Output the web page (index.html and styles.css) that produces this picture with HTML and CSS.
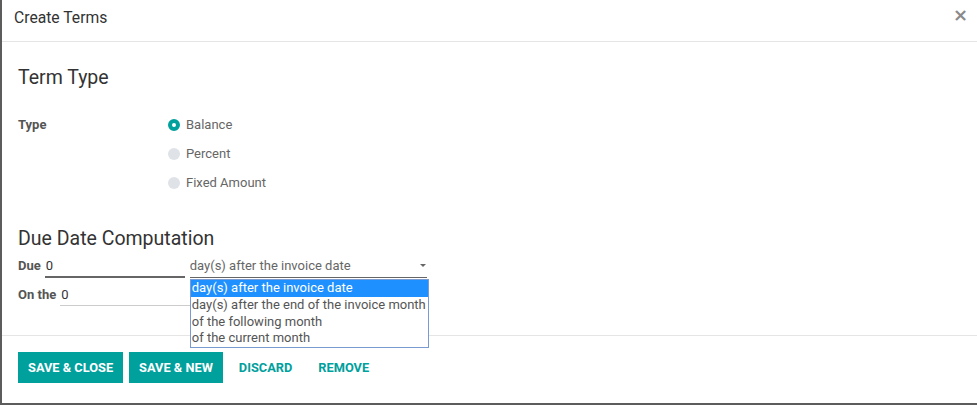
FILE: index.html
```html
<!DOCTYPE html>
<html lang="en">
  <head>
    <meta charset="UTF-8" />
    <meta name="viewport" content="width=device-width, initial-scale=1.0" />
    <title>Create Terms</title>
    <link rel="stylesheet" href="styles.css">
  </head>
  <body>
    <div class="modal">
      <header class="modal-header">
        <h4 class="modal-title">Create Terms</h4>
        <button class="close-btn" type="button">&times;</button>
      </header>

      <main class="modal-body">
        <h2 class="group-title">Term Type</h2>
        <div class="field-row">
          <label class="field-label">Type</label>
          <div class="radio-list">
            <label class="radio"><span class="radio-dot checked"></span>Balance</label>
            <label class="radio"><span class="radio-dot"></span>Percent</label>
            <label class="radio"><span class="radio-dot"></span>Fixed Amount</label>
          </div>
        </div>

        <h2 class="group-title second">Due Date Computation</h2>
        <div class="due-row">
          <span class="inline-label">Due</span>
          <span class="line-input due-days">0</span>
          <div class="select-wrap">
            <span class="select">day(s) after the invoice date<span class="caret"></span></span>
            <ul class="select-popup">
              <li class="active">day(s) after the invoice date</li>
              <li>day(s) after the end of the invoice month</li>
              <li>of the following month</li>
              <li>of the current month</li>
            </ul>
          </div>
        </div>
        <div class="due-row on-row">
          <span class="inline-label">On the</span>
          <span class="line-input day-of-month">0</span>
        </div>
      </main>

      <footer class="modal-footer">
        <button class="btn btn-primary" type="button">SAVE &amp; CLOSE</button>
        <button class="btn btn-primary" type="button">SAVE &amp; NEW</button>
        <button class="btn btn-link" type="button">DISCARD</button>
        <button class="btn btn-link" type="button">REMOVE</button>
      </footer>
    </div>
  </body>
</html>
```

FILE: styles.css
```css
html,
body {
  margin: 0;
  height: 100%;
  overflow: hidden;
}

body {
  background-color: #5c5c5c;
  font-family: Roboto, "Noto Sans", sans-serif;
  font-size: 13px;
  color: #666666;
}

.modal {
  margin-left: 2px;
  width: 975px;
  height: 403px;
  background-color: #ffffff;
}

.modal-header {
  box-sizing: border-box;
  height: 42px;
  padding: 0 12px 7px;
  display: flex;
  align-items: center;
  justify-content: space-between;
  border-bottom: 1px solid #e5e5e5;
}

.modal-title {
  margin: 0;
  font-size: 15.7px;
  font-weight: 400;
  color: #333333;
}

.close-btn {
  border: none;
  background: none;
  padding: 0;
  margin-right: -3px;
  margin-top: -4px;
  font-family: "DejaVu Sans", sans-serif;
  font-size: 18px;
  font-weight: bold;
  color: #8a8a8a;
  line-height: 1;
}

.modal-body {
  padding: 24px 16px 29px;
}

.group-title {
  margin: 0;
  font-size: 19.5px;
  line-height: 24px;
  font-weight: 400;
  color: #333333;
}

.group-title.second {
  margin-top: 30px;
}

.field-row {
  display: flex;
  margin-top: 20px;
}

.field-label {
  width: 150px;
  line-height: 29px;
  font-weight: bold;
  color: #555555;
}

.radio-list {
  display: flex;
  flex-direction: column;
}

.radio {
  display: flex;
  align-items: center;
  height: 29px;
  gap: 6px;
}

.radio-dot {
  box-sizing: border-box;
  width: 12px;
  height: 12px;
  border-radius: 50%;
  background-color: #dfe3e7;
}

.radio-dot.checked {
  background-color: #ffffff;
  border: 4px solid #00a09d;
}

.due-row {
  display: flex;
  margin-top: 4px;
  line-height: 21px;
}

.due-row.on-row {
  margin-top: 6px;
}

.inline-label {
  font-weight: bold;
  color: #555555;
  margin-right: 4px;
}

.line-input {
  box-sizing: border-box;
  height: 23px;
  padding-left: 1px;
  color: #333333;
  border-bottom: 2px solid #666666;
}

.due-days {
  width: 140px;
}

.day-of-month {
  width: 140px;
  height: 22px;
  border-bottom: 1px solid #cccccc;
}

.select-wrap {
  position: relative;
  margin-left: 5px;
}

.select {
  box-sizing: border-box;
  display: block;
  position: relative;
  width: 237px;
  height: 23px;
  color: #666666;
  border-bottom: 1px solid #666666;
}

.caret {
  position: absolute;
  right: 1px;
  top: 9px;
  border-left: 3px solid transparent;
  border-right: 3px solid transparent;
  border-top: 3px solid #666666;
}

.select-popup {
  position: absolute;
  left: 0;
  top: 24px;
  width: 237px;
  margin: 0;
  padding: 0;
  list-style: none;
  background-color: #ffffff;
  border: 1px solid #7a9bd2;
  z-index: 2;
}

.select-popup li {
  line-height: 16.75px;
  padding-left: 1px;
  white-space: nowrap;
  color: #555555;
}

.select-popup li.active {
  background-color: #1e90ff;
  color: #ffffff;
}

.modal-footer {
  border-top: 1px solid #e5e5e5;
  padding: 16px 16px;
  display: flex;
  gap: 6px;
}

.btn {
  height: 31px;
  padding: 0 10px;
  border: none;
  font-family: Roboto, "Noto Sans", sans-serif;
  font-size: 12.8px;
  font-weight: bold;
  cursor: pointer;
}

.btn-primary {
  background-color: #00a09d;
  color: #ffffff;
}

.btn-link {
  background: none;
  color: #00a09d;
}
```
